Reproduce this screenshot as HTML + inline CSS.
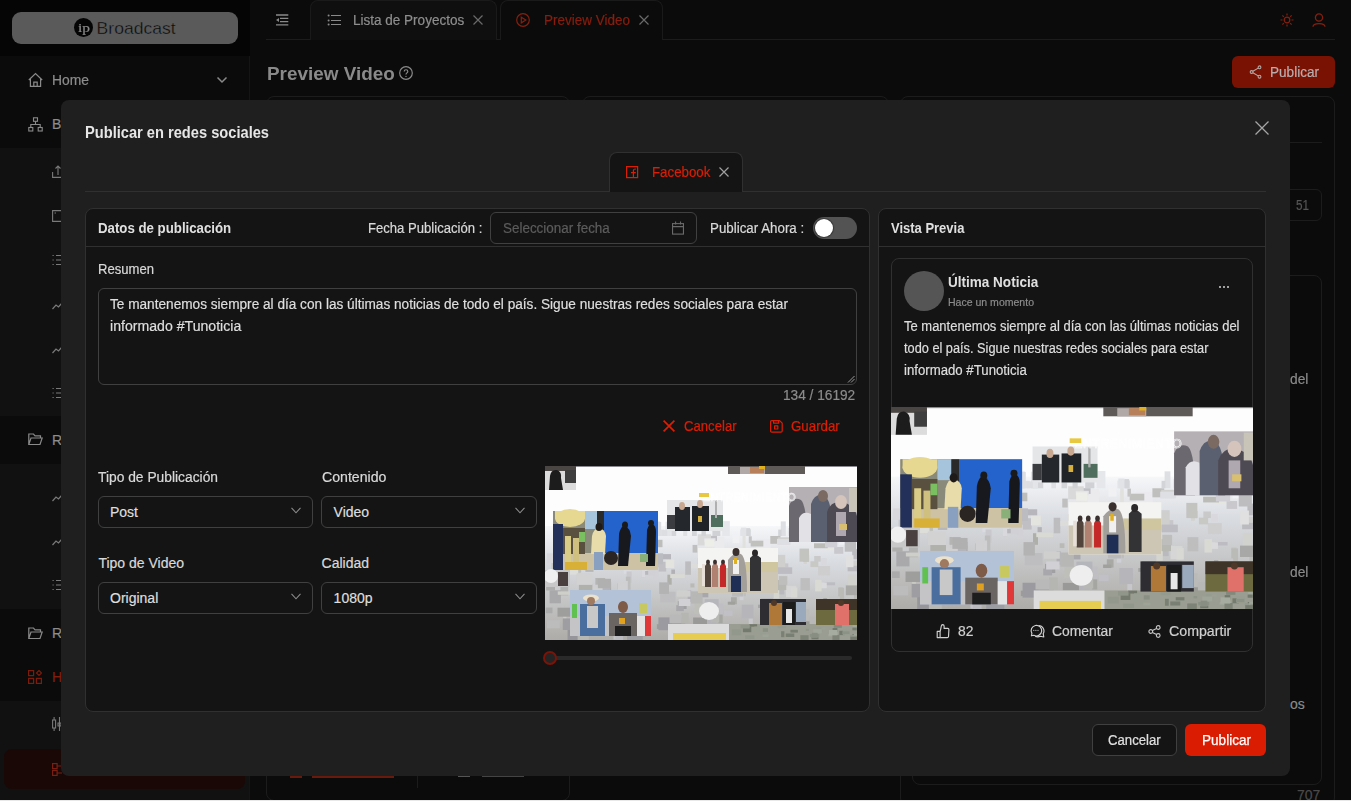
<!DOCTYPE html>
<html><head><meta charset="utf-8"><style>
*{box-sizing:border-box;margin:0;padding:0}
html,body{width:1351px;height:801px;overflow:hidden;background:#e8e8e8}
body{font-family:"Liberation Sans",sans-serif;position:relative}
.abs{position:absolute}
.t{position:absolute;white-space:nowrap;-webkit-text-stroke-width:0.2px}
</style></head><body>
<svg width="0" height="0" style="position:absolute"><defs><linearGradient id="cityg" x1="0" y1="0" x2="0" y2="1"><stop offset="0" stop-color="#f6f7f9"/><stop offset="0.3" stop-color="#dadde2"/><stop offset="1" stop-color="#aeaca8"/></linearGradient><g id="collage"><rect x="0.0" y="0.0" width="312.0" height="174.0" fill="#fdfdfd"/>
<rect x="0" y="60" width="312" height="114" fill="url(#cityg)"/>
<rect x="101.0" y="83.4" width="11.5" height="3.8" fill="#d4d4d3"/>
<rect x="18.1" y="119.8" width="3.5" height="7.8" fill="#aaaaa5"/>
<rect x="132.4" y="152.3" width="4.6" height="5.5" fill="#b7b7be"/>
<rect x="180.1" y="108.5" width="15.7" height="3.5" fill="#d8d8d6"/>
<rect x="45.0" y="80.0" width="7.0" height="12.0" fill="#c3c3c5"/>
<rect x="199.3" y="106.0" width="10.1" height="3.7" fill="#b0b0ac"/>
<rect x="212.3" y="111.6" width="7.1" height="9.4" fill="#c2c2c0"/>
<rect x="247.8" y="139.3" width="6.2" height="9.3" fill="#b8b8be"/>
<rect x="227.6" y="97.4" width="15.7" height="4.3" fill="#c7c7cb"/>
<rect x="47.4" y="117.9" width="3.5" height="10.4" fill="#cfcfd1"/>
<rect x="273.1" y="100.0" width="12.0" height="9.5" fill="#cecece"/>
<rect x="262.1" y="164.4" width="9.2" height="10.3" fill="#939396"/>
<rect x="201.9" y="169.3" width="13.7" height="6.1" fill="#a2a2a5"/>
<rect x="7.0" y="115.1" width="5.2" height="4.3" fill="#ababaf"/>
<rect x="40.4" y="93.3" width="8.1" height="12.6" fill="#b7b7b7"/>
<rect x="171.4" y="158.1" width="13.7" height="12.5" fill="#a2a2a1"/>
<rect x="111.9" y="158.2" width="15.5" height="4.7" fill="#9c9c99"/>
<rect x="72.8" y="117.5" width="10.7" height="5.9" fill="#a7a7a6"/>
<rect x="115.2" y="125.8" width="15.4" height="10.6" fill="#bebec0"/>
<rect x="211.0" y="73.5" width="14.7" height="11.6" fill="#eaeaef"/>
<rect x="122.4" y="108.7" width="4.3" height="10.0" fill="#afafa9"/>
<rect x="65.1" y="84.6" width="7.4" height="3.6" fill="#b7b7b3"/>
<rect x="31.7" y="105.1" width="3.3" height="12.6" fill="#cdcdc9"/>
<rect x="78.7" y="103.4" width="7.7" height="4.4" fill="#dadae1"/>
<rect x="145.4" y="117.4" width="4.1" height="4.1" fill="#b9b9b6"/>
<rect x="258.6" y="84.5" width="3.3" height="13.5" fill="#d3d3cf"/>
<rect x="169.5" y="70.8" width="9.9" height="13.8" fill="#ebebee"/>
<rect x="81.5" y="105.4" width="5.2" height="11.5" fill="#c9c9cd"/>
<rect x="102.9" y="90.8" width="13.5" height="13.8" fill="#e1e1e6"/>
<rect x="255.3" y="143.5" width="5.9" height="8.7" fill="#adada7"/>
<rect x="8.7" y="96.5" width="6.4" height="10.6" fill="#e3e3e3"/>
<rect x="292.4" y="168.8" width="15.4" height="7.0" fill="#9a9a97"/>
<rect x="61.4" y="88.8" width="11.1" height="12.9" fill="#e1e1e1"/>
<rect x="203.7" y="149.6" width="4.1" height="10.3" fill="#c7c7cb"/>
<rect x="234.0" y="116.8" width="5.3" height="11.7" fill="#b9b9be"/>
<rect x="303.2" y="108.4" width="8.2" height="13.4" fill="#d1d1cd"/>
<rect x="39.6" y="83.4" width="14.8" height="11.9" fill="#c0c0c5"/>
<rect x="305.9" y="135.0" width="7.6" height="9.0" fill="#a5a59f"/>
<rect x="302.9" y="134.3" width="9.8" height="13.3" fill="#b6b6bc"/>
<rect x="257.8" y="89.5" width="6.3" height="6.2" fill="#c1c1c3"/>
<rect x="80.9" y="110.7" width="4.7" height="13.0" fill="#bdbdbd"/>
<rect x="182.0" y="160.2" width="8.5" height="13.1" fill="#acacad"/>
<rect x="163.3" y="69.9" width="8.7" height="5.0" fill="#bfbfc4"/>
<rect x="53.8" y="116.3" width="12.4" height="9.1" fill="#b9b9ba"/>
<rect x="173.3" y="148.0" width="4.4" height="9.2" fill="#a5a5a2"/>
<rect x="240.9" y="119.8" width="10.3" height="11.4" fill="#d6d6d6"/>
<rect x="191.1" y="119.6" width="9.7" height="10.6" fill="#bebebf"/>
<rect x="149.1" y="164.0" width="12.1" height="12.6" fill="#c1c1be"/>
<rect x="174.6" y="164.2" width="13.9" height="4.5" fill="#979797"/>
<rect x="22.6" y="92.5" width="4.0" height="10.4" fill="#dcdce2"/>
<rect x="48.2" y="141.0" width="11.6" height="4.6" fill="#cacad1"/>
<rect x="68.5" y="165.2" width="8.2" height="8.4" fill="#c3c3c8"/>
<rect x="50.4" y="112.0" width="9.7" height="6.7" fill="#b4b4b2"/>
<rect x="225.3" y="70.0" width="10.2" height="7.8" fill="#bfbfbd"/>
<rect x="194.7" y="120.3" width="3.8" height="13.8" fill="#cfcfd6"/>
<rect x="32.7" y="95.1" width="3.5" height="11.6" fill="#c0c0bb"/>
<rect x="131.7" y="161.0" width="13.6" height="5.8" fill="#9a9aa0"/>
<rect x="178.0" y="139.4" width="4.2" height="3.6" fill="#c0c0bf"/>
<rect x="22.6" y="163.7" width="11.2" height="11.8" fill="#95959a"/>
<rect x="20.8" y="156.0" width="8.9" height="6.7" fill="#b1b1b7"/>
<rect x="83.6" y="81.2" width="9.8" height="5.6" fill="#bfbfbb"/>
<rect x="15.7" y="88.6" width="7.1" height="6.4" fill="#dddddb"/>
<rect x="156.0" y="86.1" width="7.5" height="3.2" fill="#c4c4be"/>
<rect x="228.7" y="124.2" width="5.5" height="8.2" fill="#d5d5d0"/>
<rect x="255.5" y="112.1" width="9.4" height="12.2" fill="#bebebf"/>
<rect x="214.6" y="168.2" width="7.5" height="12.2" fill="#b3b3b5"/>
<rect x="126.3" y="103.5" width="3.7" height="4.4" fill="#b2b2b6"/>
<rect x="79.7" y="84.7" width="4.1" height="12.3" fill="#e5e5e8"/>
<rect x="88.0" y="92.7" width="6.8" height="8.1" fill="#bcbcbc"/>
<rect x="82.1" y="166.1" width="15.6" height="9.0" fill="#9c9ca3"/>
<rect x="96.6" y="104.4" width="3.0" height="7.2" fill="#c6c6c7"/>
<rect x="62.7" y="119.5" width="3.1" height="5.9" fill="#ababaa"/>
<rect x="13.0" y="70.3" width="7.0" height="5.6" fill="#ddddde"/>
<rect x="234.2" y="135.1" width="12.3" height="12.7" fill="#b3b3b1"/>
<rect x="307.2" y="83.2" width="12.4" height="10.1" fill="#bababf"/>
<rect x="278.3" y="132.0" width="12.5" height="11.9" fill="#a7a7a8"/>
<rect x="157.4" y="153.2" width="13.5" height="12.1" fill="#b4b4ba"/>
<rect x="213.1" y="138.7" width="6.0" height="3.3" fill="#a4a4a3"/>
<rect x="32.7" y="153.3" width="10.3" height="9.9" fill="#b6b6b9"/>
<rect x="152.7" y="68.3" width="13.4" height="11.2" fill="#d9d9da"/>
<rect x="205.7" y="74.7" width="12.6" height="5.8" fill="#c0c0bd"/>
<rect x="227.6" y="88.9" width="12.6" height="13.7" fill="#cfcfce"/>
<rect x="149.5" y="137.7" width="13.0" height="9.8" fill="#bfbfba"/>
<rect x="46.0" y="93.9" width="12.7" height="6.3" fill="#d0d0ca"/>
<rect x="18.9" y="95.4" width="11.7" height="10.6" fill="#d5d5d3"/>
<rect x="161.2" y="115.4" width="9.1" height="4.3" fill="#d7d7d3"/>
<rect x="305.2" y="163.5" width="3.2" height="8.0" fill="#bbbbc2"/>
<rect x="140.2" y="95.4" width="5.7" height="13.4" fill="#bdbdbf"/>
<rect x="44.2" y="121.5" width="15.4" height="4.5" fill="#d0d0d1"/>
<rect x="276.7" y="139.7" width="6.0" height="12.9" fill="#b6b6b0"/>
<rect x="1.1" y="118.2" width="8.9" height="6.3" fill="#aeaeac"/>
<rect x="98.6" y="153.7" width="3.0" height="11.3" fill="#c1c1bc"/>
<rect x="289.0" y="140.7" width="14.7" height="6.2" fill="#afafae"/>
<rect x="311.6" y="128.1" width="7.7" height="7.7" fill="#b0b0aa"/>
<rect x="31.7" y="153.1" width="6.7" height="13.3" fill="#a3a3a0"/>
<rect x="159.4" y="87.4" width="7.9" height="13.5" fill="#e4e4e9"/>
<rect x="196.8" y="161.2" width="15.2" height="9.0" fill="#b7b7b1"/>
<rect x="228.5" y="114.0" width="12.8" height="10.1" fill="#b8b8b2"/>
<rect x="289.2" y="81.0" width="9.1" height="6.8" fill="#c9c9cd"/>
<rect x="304.6" y="94.5" width="11.5" height="6.3" fill="#cfcfce"/>
<rect x="52.2" y="84.5" width="5.7" height="13.0" fill="#d1d1ce"/>
<rect x="282.8" y="169.6" width="8.8" height="4.5" fill="#989893"/>
<rect x="106.7" y="77.3" width="6.1" height="5.8" fill="#d9d9df"/>
<rect x="233.9" y="110.1" width="8.4" height="8.8" fill="#bebebc"/>
<rect x="19.4" y="96.3" width="15.6" height="4.4" fill="#ccccce"/>
<rect x="269.2" y="90.0" width="6.5" height="5.7" fill="#c9c9c9"/>
<rect x="297.6" y="154.6" width="14.3" height="3.2" fill="#97979a"/>
<rect x="279.5" y="116.3" width="10.6" height="3.0" fill="#bcbcc2"/>
<rect x="257.6" y="155.3" width="15.6" height="5.7" fill="#9a9a96"/>
<rect x="163.0" y="137.6" width="15.2" height="10.9" fill="#bfbfc3"/>
<rect x="142.7" y="124.3" width="3.5" height="11.6" fill="#b0b0b6"/>
<rect x="201.4" y="99.0" width="4.7" height="5.8" fill="#d1d1d4"/>
<rect x="35.0" y="75.2" width="9.8" height="9.4" fill="#d0d0cd"/>
<rect x="187.5" y="69.1" width="6.9" height="8.1" fill="#f1f1f4"/>
<rect x="275.7" y="116.5" width="6.1" height="5.7" fill="#dadadd"/>
<rect x="95.9" y="70.2" width="9.5" height="10.4" fill="#d4d4d1"/>
<rect x="208.2" y="162.4" width="5.9" height="3.4" fill="#a3a3a2"/>
<rect x="213.0" y="88.2" width="13.4" height="11.1" fill="#d0d0cc"/>
<rect x="302.6" y="99.8" width="13.7" height="5.5" fill="#bbbbbf"/>
<rect x="92.0" y="165.1" width="9.4" height="5.1" fill="#9c9c9b"/>
<rect x="207.6" y="164.8" width="4.9" height="7.3" fill="#9b9ba2"/>
<rect x="44.3" y="73.3" width="3.8" height="7.3" fill="#ececf2"/>
<rect x="228.6" y="169.7" width="15.1" height="6.6" fill="#97979e"/>
<rect x="232.8" y="71.3" width="11.6" height="7.2" fill="#d1d1cf"/>
<rect x="52.8" y="68.3" width="6.6" height="6.9" fill="#f1f1ec"/>
<rect x="300.9" y="89.2" width="7.6" height="12.0" fill="#e0e0e0"/>
<rect x="15.4" y="116.3" width="7.8" height="13.1" fill="#b2b2b1"/>
<rect x="279.9" y="71.1" width="8.3" height="11.9" fill="#e6e6e0"/>
<rect x="10.9" y="74.4" width="15.0" height="5.8" fill="#e3e3e9"/>
<rect x="105.8" y="95.8" width="15.4" height="9.8" fill="#c0c0c4"/>
<rect x="98.7" y="96.1" width="3.0" height="11.3" fill="#e1e1e3"/>
<rect x="294.3" y="70.5" width="6.0" height="8.2" fill="#f0f0f7"/>
<rect x="120.6" y="93.6" width="8.6" height="8.4" fill="#e3e3df"/>
<rect x="250.4" y="143.3" width="13.7" height="11.5" fill="#babab8"/>
<rect x="99.7" y="104.9" width="13.2" height="3.9" fill="#b8b8bc"/>
<rect x="77.2" y="74.6" width="3.4" height="9.1" fill="#cdcdd4"/>
<rect x="275.6" y="168.8" width="6.4" height="3.9" fill="#939393"/>
<rect x="221.4" y="113.6" width="6.0" height="7.6" fill="#c9c9cc"/>
<rect x="233.4" y="154.4" width="11.6" height="4.3" fill="#c1c1bf"/>
<rect x="176.9" y="106.0" width="12.6" height="5.2" fill="#babab7"/>
<rect x="47.8" y="158.2" width="10.5" height="6.6" fill="#a8a8af"/>
<rect x="158.3" y="91.6" width="13.5" height="10.2" fill="#e7e7e2"/>
<rect x="148.1" y="151.5" width="13.9" height="13.1" fill="#999997"/>
<rect x="37.2" y="87.3" width="15.6" height="9.4" fill="#e6e6e5"/>
<rect x="270.2" y="113.8" width="6.4" height="11.6" fill="#dadad5"/>
<rect x="186.0" y="131.2" width="5.8" height="7.1" fill="#a8a8a4"/>
<rect x="79.5" y="129.1" width="11.5" height="5.2" fill="#a2a2a0"/>
<rect x="211.6" y="86.9" width="7.1" height="5.2" fill="#e0e0e1"/>
<rect x="19.7" y="78.3" width="8.1" height="9.1" fill="#dcdcd7"/>
<rect x="51.1" y="138.9" width="8.3" height="6.1" fill="#adadb4"/>
<rect x="97.5" y="125.8" width="7.6" height="7.6" fill="#d0d0d7"/>
<rect x="113.5" y="88.1" width="12.5" height="5.2" fill="#b6b6bc"/>
<rect x="132.2" y="151.7" width="8.3" height="12.7" fill="#aeaeaa"/>
<rect x="4.6" y="124.3" width="11.3" height="13.0" fill="#a9a9ab"/>
<rect x="115.7" y="119.5" width="4.9" height="6.1" fill="#c1c1c7"/>
<rect x="33.9" y="118.0" width="13.5" height="13.6" fill="#b1b1ac"/>
<rect x="294.2" y="167.5" width="9.3" height="3.6" fill="#bfbfbe"/>
<rect x="282.1" y="131.3" width="13.7" height="4.8" fill="#c9c9c6"/>
<rect x="126.2" y="154.3" width="13.8" height="5.0" fill="#a1a1a0"/>
<rect x="161.6" y="107.1" width="4.6" height="5.7" fill="#d2d2d8"/>
<rect x="12.8" y="125.4" width="12.8" height="3.4" fill="#cfcfca"/>
<rect x="187.1" y="124.1" width="11.2" height="6.4" fill="#bababc"/>
<rect x="132.8" y="135.2" width="8.8" height="7.8" fill="#a0a0a2"/>
<rect x="152.7" y="92.0" width="12.9" height="11.6" fill="#ccccc8"/>
<rect x="147.6" y="78.9" width="4.7" height="7.7" fill="#bfbfbf"/>
<rect x="159.2" y="72.2" width="11.3" height="3.9" fill="#e4e4e8"/>
<rect x="159.6" y="73.5" width="9.6" height="7.2" fill="#eeeee9"/>
<rect x="267.4" y="169.6" width="12.5" height="12.0" fill="#98989f"/>
<rect x="153.5" y="165.6" width="14.9" height="4.8" fill="#b9b9c0"/>
<rect x="20.4" y="103.8" width="12.8" height="4.7" fill="#ddddda"/>
<rect x="254.5" y="82.6" width="9.5" height="13.1" fill="#c3c3c0"/>
<rect x="157.9" y="100.5" width="3.5" height="5.0" fill="#b8b8bf"/>
<rect x="212.1" y="159.3" width="5.2" height="11.6" fill="#99999a"/>
<rect x="198.5" y="104.7" width="14.3" height="9.1" fill="#ccccd2"/>
<rect x="32.6" y="169.3" width="11.2" height="7.3" fill="#b7b7b4"/>
<rect x="309.0" y="126.9" width="7.7" height="11.4" fill="#babab6"/>
<rect x="232.0" y="72.9" width="13.7" height="5.8" fill="#dedee5"/>
<rect x="182.8" y="135.7" width="7.1" height="3.0" fill="#a0a09c"/>
<rect x="192.2" y="112.1" width="9.7" height="12.9" fill="#b1b1ae"/>
<rect x="203.8" y="70.3" width="3.0" height="6.9" fill="#c4c4c3"/>
<rect x="70.0" y="127.5" width="10.7" height="5.2" fill="#c3c3c3"/>
<rect x="42.0" y="163.5" width="6.2" height="4.6" fill="#969698"/>
<rect x="271.8" y="147.8" width="8.2" height="5.9" fill="#99999c"/>
<rect x="175.4" y="103.7" width="11.4" height="7.9" fill="#dfdfe3"/>
<rect x="77.5" y="160.2" width="3.6" height="8.8" fill="#a7a7a4"/>
<rect x="18.2" y="147.4" width="3.2" height="9.1" fill="#c9c9c4"/>
<rect x="62.2" y="130.0" width="9.6" height="10.1" fill="#cbcbc7"/>
<rect x="96.5" y="98.6" width="3.6" height="12.8" fill="#d9d9dd"/>
<rect x="2.0" y="154.1" width="12.7" height="8.1" fill="#bcbcbc"/>
<rect x="70.5" y="78.7" width="6.0" height="3.4" fill="#ccccd0"/>
<rect x="216.9" y="154.2" width="12.3" height="5.9" fill="#b2b2b2"/>
<rect x="246.0" y="121.4" width="6.4" height="10.1" fill="#d8d8d5"/>
<rect x="274.6" y="69.6" width="6.4" height="5.6" fill="#e5e5ec"/>
<rect x="232.8" y="101.3" width="14.4" height="6.6" fill="#bcbcc2"/>
<rect x="196.8" y="138.7" width="11.6" height="13.8" fill="#b5b5ba"/>
<rect x="217.7" y="155.5" width="8.7" height="11.0" fill="#b2b2b0"/>
<rect x="66.1" y="131.5" width="4.0" height="13.0" fill="#a8a8a2"/>
<rect x="33.3" y="162.8" width="7.5" height="4.6" fill="#93938d"/>
<rect x="216.1" y="132.7" width="12.1" height="11.1" fill="#a3a3a5"/>
<rect x="113.4" y="151.4" width="13.7" height="12.8" fill="#9a9aa0"/>
<rect x="285.3" y="164.3" width="4.4" height="5.3" fill="#969690"/>
<rect x="264.5" y="150.8" width="11.2" height="12.1" fill="#b8b8b6"/>
<rect x="31.2" y="78.0" width="12.8" height="5.3" fill="#cbcbca"/>
<rect x="6.5" y="94.2" width="6.7" height="10.9" fill="#c6c6c4"/>
<rect x="300.8" y="119.4" width="14.1" height="9.8" fill="#a8a8a7"/>
<rect x="136.2" y="146.8" width="7.5" height="10.8" fill="#b5b5b2"/>
<rect x="269.0" y="77.3" width="13.7" height="4.9" fill="#bbbbb7"/>
<rect x="237.8" y="167.7" width="3.1" height="8.4" fill="#a8a8ad"/>
<rect x="57.6" y="118.4" width="7.5" height="12.2" fill="#b4b4bb"/>
<rect x="88.5" y="89.9" width="12.1" height="8.5" fill="#bababc"/>
<rect x="25.2" y="148.4" width="12.1" height="11.7" fill="#b9b9b7"/>
<rect x="125.2" y="108.2" width="14.6" height="3.9" fill="#dadad4"/>
<rect x="64.3" y="94.8" width="14.7" height="8.5" fill="#c6c6cc"/>
<rect x="72.9" y="115.0" width="9.9" height="11.3" fill="#d0d0d3"/>
<rect x="108.7" y="101.3" width="5.0" height="12.3" fill="#d2d2d6"/>
<rect x="52.9" y="112.8" width="13.1" height="9.4" fill="#b0b0b0"/>
<rect x="276.2" y="92.3" width="5.5" height="6.3" fill="#d8d8dd"/>
<rect x="48.2" y="83.9" width="6.2" height="6.6" fill="#d3d3cf"/>
<rect x="102.4" y="87.3" width="15.7" height="11.0" fill="#bbbbc2"/>
<rect x="31.7" y="107.2" width="15.8" height="11.7" fill="#d2d2d2"/>
<rect x="61.2" y="133.1" width="4.4" height="5.3" fill="#b4b4ae"/>
<rect x="124.5" y="148.7" width="12.0" height="8.5" fill="#b9b9b9"/>
<rect x="44.2" y="129.6" width="8.3" height="11.2" fill="#d1d1d1"/>
<rect x="179.1" y="144.4" width="8.5" height="5.5" fill="#c0c0c6"/>
<rect x="241.5" y="139.4" width="14.1" height="10.5" fill="#bebebe"/>
<rect x="97.7" y="132.1" width="4.3" height="7.6" fill="#c9c9cc"/>
<rect x="196.4" y="93.5" width="8.5" height="8.0" fill="#d3d3d2"/>
<rect x="210.7" y="162.9" width="5.4" height="10.2" fill="#b9b9b8"/>
<rect x="152.8" y="167.4" width="3.5" height="9.0" fill="#97979b"/>
<rect x="293.5" y="121.0" width="4.3" height="9.3" fill="#c2c2c6"/>
<rect x="159.8" y="133.2" width="13.8" height="8.7" fill="#b5b5bc"/>
<rect x="65.5" y="137.8" width="8.1" height="11.4" fill="#a4a4ab"/>
<rect x="110.9" y="73.8" width="6.6" height="7.4" fill="#bdbdbc"/>
<rect x="131.2" y="139.2" width="7.6" height="5.9" fill="#a8a8ac"/>
<rect x="293.3" y="121.8" width="5.8" height="11.8" fill="#babab6"/>
<rect x="40.3" y="147.2" width="13.5" height="10.0" fill="#b1b1b2"/>
<rect x="70.5" y="166.3" width="7.6" height="10.0" fill="#bababf"/>
<rect x="146.0" y="98.0" width="10.1" height="4.4" fill="#dcdcda"/>
<rect x="265.4" y="95.3" width="7.9" height="5.8" fill="#c8c8c4"/>
<rect x="0.8" y="141.6" width="6.7" height="5.7" fill="#ababab"/>
<rect x="133.7" y="133.0" width="11.6" height="7.0" fill="#d0d0d5"/>
<rect x="17.8" y="152.4" width="14.8" height="11.6" fill="#9d9da2"/>
<rect x="197.5" y="69.5" width="3.1" height="13.5" fill="#e1e1de"/>
<rect x="31.7" y="82.6" width="6.0" height="11.5" fill="#cacac6"/>
<rect x="282.1" y="148.8" width="5.2" height="12.8" fill="#b8b8bc"/>
<rect x="208.6" y="159.2" width="13.2" height="12.2" fill="#9d9da0"/>
<rect x="165.6" y="143.7" width="8.7" height="12.7" fill="#b7b7b4"/>
<rect x="73.1" y="82.2" width="9.4" height="3.6" fill="#d1d1cd"/>
<rect x="153.3" y="118.8" width="10.0" height="12.5" fill="#a7a7ac"/>
<rect x="146.0" y="125.4" width="11.6" height="12.2" fill="#b7b7b6"/>
<rect x="299.7" y="75.7" width="11.3" height="10.0" fill="#bdbdbf"/>
<rect x="213.0" y="163.0" width="7.3" height="13.8" fill="#ababab"/>
<rect x="280.0" y="71.5" width="12.3" height="9.9" fill="#cfcfd5"/>
<rect x="114.2" y="116.4" width="9.8" height="11.5" fill="#b3b3b3"/>
<rect x="131.8" y="124.5" width="13.7" height="6.2" fill="#cfcfce"/>
<rect x="157.2" y="95.7" width="9.6" height="13.7" fill="#d4d4d9"/>
<rect x="103.2" y="100.3" width="6.9" height="9.5" fill="#d1d1d5"/>
<rect x="12.5" y="141.7" width="14.5" height="9.0" fill="#9e9e9c"/>
<rect x="1.9" y="87.4" width="15.0" height="9.7" fill="#d8d8dd"/>
<rect x="283.9" y="130.4" width="11.0" height="9.9" fill="#c5c5c7"/>
<rect x="128.0" y="158.0" width="184.0" height="16.0" fill="#9a9e92"/>
<rect x="271.5" y="161.0" width="6.2" height="5.1" fill="#979c90"/>
<rect x="197.9" y="160.5" width="8.4" height="5.7" fill="#757a6e"/>
<rect x="268.3" y="163.2" width="8.5" height="4.2" fill="#a0a599"/>
<rect x="217.8" y="162.2" width="5.2" height="3.7" fill="#8a8f83"/>
<rect x="266.5" y="171.1" width="7.0" height="2.2" fill="#767b6f"/>
<rect x="200.1" y="169.3" width="9.4" height="3.8" fill="#92978b"/>
<rect x="186.8" y="163.4" width="9.6" height="5.9" fill="#93988c"/>
<rect x="245.4" y="163.8" width="7.5" height="2.8" fill="#787d71"/>
<rect x="204.3" y="158.2" width="7.8" height="2.5" fill="#73786c"/>
<rect x="307.7" y="159.2" width="3.9" height="2.1" fill="#a2a79b"/>
<rect x="276.4" y="161.4" width="4.3" height="2.2" fill="#9ba094"/>
<rect x="283.3" y="168.0" width="8.1" height="2.3" fill="#a2a79b"/>
<rect x="264.8" y="167.9" width="9.5" height="3.0" fill="#8c9185"/>
<rect x="307.5" y="168.0" width="3.1" height="4.6" fill="#73786c"/>
<rect x="288.8" y="159.1" width="8.1" height="2.7" fill="#84897d"/>
<rect x="294.3" y="164.8" width="5.6" height="4.3" fill="#767b6f"/>
<rect x="240.7" y="167.5" width="8.6" height="3.5" fill="#7a7f73"/>
<rect x="266.9" y="166.8" width="5.7" height="5.1" fill="#898e82"/>
<rect x="305.0" y="169.0" width="5.0" height="2.2" fill="#92978b"/>
<rect x="308.7" y="167.8" width="5.3" height="4.4" fill="#a0a599"/>
<rect x="309.1" y="169.6" width="5.2" height="3.7" fill="#94998d"/>
<rect x="297.8" y="163.3" width="7.2" height="5.6" fill="#989d91"/>
<rect x="287.6" y="162.0" width="4.8" height="3.7" fill="#73786c"/>
<rect x="259.5" y="169.4" width="3.3" height="5.3" fill="#a3a89c"/>
<rect x="288.1" y="170.1" width="4.9" height="5.4" fill="#92978b"/>
<rect x="287.5" y="167.6" width="5.4" height="2.3" fill="#a5aa9e"/>
<rect x="255.3" y="169.2" width="8.3" height="5.7" fill="#7e8377"/>
<rect x="214.7" y="166.5" width="6.3" height="2.8" fill="#989d91"/>
<rect x="217.4" y="168.5" width="6.2" height="2.4" fill="#9ea397"/>
<rect x="287.4" y="168.8" width="7.1" height="5.6" fill="#7f8478"/>
<rect x="297.4" y="165.3" width="7.1" height="2.8" fill="#8d9286"/>
<rect x="209.4" y="160.5" width="5.5" height="4.3" fill="#999e92"/>
<rect x="236.1" y="165.2" width="3.3" height="6.0" fill="#7b8074"/>
<rect x="232.5" y="159.5" width="8.5" height="2.6" fill="#959a8e"/>
<rect x="260.8" y="162.8" width="3.1" height="2.1" fill="#8f9488"/>
<rect x="310.8" y="170.1" width="7.0" height="3.0" fill="#8d9286"/>
<rect x="284.0" y="164.0" width="8.4" height="5.3" fill="#a7aca0"/>
<rect x="307.4" y="161.6" width="4.4" height="2.7" fill="#757a6e"/>
<rect x="195.6" y="158.7" width="9.1" height="3.8" fill="#91968a"/>
<rect x="305.3" y="170.7" width="7.2" height="3.6" fill="#767b6f"/>
<rect x="125.4" y="55.4" width="5.8" height="14.6" fill="#d3d5d9"/>
<rect x="235.8" y="55.4" width="5.0" height="14.6" fill="#dddfe3"/>
<rect x="195.0" y="63.4" width="8.0" height="6.6" fill="#e5e7eb"/>
<rect x="147.0" y="64.6" width="4.8" height="5.4" fill="#d3d5d9"/>
<rect x="291.4" y="56.0" width="3.2" height="14.0" fill="#e1e3e7"/>
<rect x="266.7" y="57.9" width="7.9" height="12.1" fill="#dddfe3"/>
<rect x="111.8" y="63.6" width="7.7" height="6.4" fill="#dfe1e5"/>
<rect x="243.5" y="62.0" width="6.8" height="8.0" fill="#dbdde1"/>
<rect x="122.3" y="61.8" width="3.6" height="8.2" fill="#d3d5d9"/>
<rect x="202.0" y="63.3" width="3.7" height="6.7" fill="#d2d4d8"/>
<rect x="243.7" y="64.9" width="4.0" height="5.1" fill="#dee0e4"/>
<rect x="107.6" y="55.7" width="7.7" height="14.3" fill="#d2d4d8"/>
<rect x="283.8" y="56.1" width="5.2" height="13.9" fill="#d0d2d6"/>
<rect x="120.6" y="55.7" width="6.1" height="14.3" fill="#e2e4e8"/>
<rect x="195.9" y="61.6" width="5.4" height="8.4" fill="#e1e3e7"/>
<rect x="233.2" y="63.6" width="3.3" height="6.4" fill="#d2d4d8"/>
<rect x="251.3" y="59.5" width="7.4" height="10.5" fill="#d0d2d6"/>
<rect x="156.5" y="60.9" width="4.4" height="9.1" fill="#d0d2d6"/>
<rect x="278.0" y="61.7" width="5.5" height="8.3" fill="#d1d3d7"/>
<rect x="167.4" y="56.0" width="7.9" height="14.0" fill="#cfd1d5"/>
<rect x="112.1" y="56.0" width="4.1" height="14.0" fill="#dddfe3"/>
<rect x="201.2" y="62.1" width="4.0" height="7.9" fill="#d3d5d9"/>
<rect x="177.2" y="55.1" width="7.6" height="14.9" fill="#e5e7eb"/>
<rect x="120.7" y="62.1" width="3.3" height="7.9" fill="#e3e5e9"/>
<rect x="254.0" y="62.1" width="3.1" height="7.9" fill="#e5e7eb"/>
<rect x="271.1" y="61.6" width="3.0" height="8.4" fill="#d0d2d6"/>
<rect x="276.4" y="59.7" width="5.2" height="10.3" fill="#d1d3d7"/>
<rect x="293.3" y="62.8" width="3.7" height="7.2" fill="#dbdde1"/>
<rect x="138.2" y="57.3" width="4.0" height="12.7" fill="#dee0e4"/>
<rect x="116.8" y="64.1" width="5.5" height="5.9" fill="#dcdee2"/>
<rect x="0.0" y="0.0" width="312.0" height="1.0" fill="#8a8a90"/>
<rect x="0.0" y="0.0" width="31.0" height="24.0" fill="#dcdcdc"/>
<rect x="0.0" y="0.0" width="31.0" height="5.0" fill="#4a4644"/>
<rect x="20.0" y="4.0" width="11.0" height="13.0" fill="#3e3e3e"/>
<path d="M4 24 L5 10 Q6 3 12 4 Q17 6 16 12 L18 24 Z" fill="#1c1c1c"/>
<rect x="183.0" y="0.0" width="77.0" height="8.0" fill="#5e5a58"/>
<rect x="195.0" y="1.0" width="25.0" height="7.0" fill="#b0a8a6"/>
<rect x="205.0" y="1.0" width="14.0" height="6.0" fill="#b8805a"/>
<rect x="214.0" y="0.0" width="6.0" height="3.0" fill="#e0b020"/>
<rect x="8.0" y="45.0" width="105.0" height="59.0" fill="#cdc2a4"/>
<rect x="59.0" y="45.0" width="54.0" height="42.0" fill="#2563cc"/>
<rect x="8.0" y="45.0" width="51.0" height="42.0" fill="#8a8a7a"/>
<ellipse cx="25" cy="52" rx="15" ry="9" fill="#e6d890"/>
<rect x="10.0" y="45.0" width="30.0" height="8.0" fill="#e6d890"/>
<rect x="40.0" y="45.0" width="12.0" height="18.0" fill="#a6c4dc"/>
<rect x="52.0" y="45.0" width="7.0" height="22.0" fill="#2a2a2a"/>
<rect x="8.0" y="58.0" width="10.0" height="46.0" fill="#22305a"/>
<rect x="18.0" y="62.0" width="22.0" height="26.0" fill="#5a5040"/>
<rect x="20.0" y="70.0" width="6.0" height="30.0" fill="#d8cc88"/>
<rect x="28.0" y="72.0" width="6.0" height="28.0" fill="#cfc080"/>
<rect x="34.0" y="66.0" width="6.0" height="10.0" fill="#7ac060"/>
<path d="M46 88 L47 70 Q49 62 54 62 Q60 63 61 70 L60 88 Z" fill="#e8dcaa"/>
<rect x="49.0" y="86.0" width="9.0" height="18.0" fill="#8aa0c0"/>
<ellipse cx="54" cy="61" rx="3.5" ry="4" fill="#1e1a1a"/>
<path d="M73 100 L74 68 Q76 59 80 60 Q85 62 86 70 L83 100 Z" fill="#17191e"/>
<ellipse cx="80" cy="59" rx="3" ry="3.5" fill="#1a1a1a"/>
<path d="M101 100 L102 64 Q104 57 107 58 Q111 59 111 66 L110 100 Z" fill="#16181c"/>
<ellipse cx="106" cy="57" rx="3" ry="3" fill="#1a1a1a"/>
<ellipse cx="66" cy="92" rx="7" ry="7" fill="#2a2522"/>
<rect x="20.0" y="96.0" width="22.0" height="8.0" fill="#d8b038"/>
<rect x="95.0" y="88.0" width="8.0" height="8.0" fill="#8ab07a"/>
<rect x="122.0" y="34.0" width="56.0" height="31.0" fill="#e4e6e8"/>
<rect x="130.0" y="41.0" width="15.0" height="24.0" fill="#24272b"/>
<ellipse cx="137" cy="40" rx="3" ry="4" fill="#c8a890"/>
<rect x="147.0" y="40.0" width="17.0" height="25.0" fill="#202327"/>
<ellipse cx="155" cy="38" rx="3" ry="4" fill="#c8a890"/>
<rect x="153.0" y="50.0" width="4.0" height="6.0" fill="#d8b040"/>
<rect x="122.0" y="49.0" width="8.0" height="14.0" fill="#3a3c40"/>
<rect x="166.0" y="49.0" width="12.0" height="12.0" fill="#4f6e5e"/>
<rect x="170.0" y="34.0" width="2.0" height="18.0" fill="#b0b0b0"/>
<rect x="244.0" y="21.0" width="68.0" height="55.0" fill="#b4b0b4"/>
<path d="M244 76 V40 Q248 30 256 34 Q262 40 262 76 Z" fill="#6c6870"/>
<path d="M254 76 V52 Q258 44 266 48 L268 76 Z" fill="#e2e2e6"/>
<path d="M266 76 V38 Q270 26 280 30 Q288 36 288 76 Z" fill="#5a6070"/>
<ellipse cx="278" cy="30" rx="5" ry="6" fill="#7a6a62"/>
<path d="M282 76 V46 Q286 34 298 36 Q310 40 312 50 V76 Z" fill="#4e4a54"/>
<ellipse cx="296" cy="36" rx="6" ry="7" fill="#d4c4bc"/>
<rect x="291.0" y="46.0" width="10.0" height="24.0" fill="#b0a8b0"/>
<rect x="294.0" y="58.0" width="8.0" height="6.0" fill="#d8c070"/>
<rect x="304.0" y="22.0" width="8.0" height="24.0" fill="#c8c4b8"/>
<text x="158" y="35" font-family="Liberation Sans" font-size="10.5" fill="none" stroke="#ffffff" stroke-width="0.6" letter-spacing="0.5" opacity="0.9">ENTRENIMIENTO</text>
<rect x="154.0" y="27.0" width="10.0" height="4.0" fill="#e8c840"/>
<rect x="153.0" y="82.0" width="80.0" height="45.0" fill="#f4f4f2"/>
<rect x="153.0" y="102.0" width="80.0" height="25.0" fill="#cdc6b4"/>
<rect x="200.0" y="96.0" width="33.0" height="10.0" fill="#cfc6a0"/>
<path d="M160 121 V100 Q163 94 166 100 V121 Z" fill="#50443c"/>
<ellipse cx="163" cy="96" rx="2" ry="2.5" fill="#3a3030"/>
<path d="M167 121 V100 Q170 94 173 100 V121 Z" fill="#b08070"/>
<ellipse cx="170" cy="96" rx="2" ry="2.5" fill="#3a3030"/>
<path d="M175 121 V100 Q178 94 181 100 V121 Z" fill="#c42828"/>
<ellipse cx="178" cy="96" rx="2" ry="2.5" fill="#3a3030"/>
<rect x="157.0" y="98.0" width="3.0" height="22.0" fill="#e8e0d8"/>
<path d="M183 126 V94 Q189 86 196 88 Q202 92 202 126 Z" fill="#a29e9a"/>
<rect x="188.0" y="94.0" width="6.0" height="14.0" fill="#f0f0f0"/>
<rect x="186.0" y="110.0" width="10.0" height="16.0" fill="#1f2e55"/>
<ellipse cx="191" cy="86" rx="3.5" ry="4" fill="#3a3030"/>
<rect x="189.0" y="92.0" width="3.0" height="6.0" fill="#e0b020"/>
<path d="M205 125 V92 Q210 86 216 92 V125 Z" fill="#333336"/>
<ellipse cx="210" cy="87" rx="3" ry="3.5" fill="#2a2828"/>
<rect x="25.0" y="124.0" width="81.0" height="46.0" fill="#b4c2d8"/>
<rect x="25.0" y="150.0" width="81.0" height="20.0" fill="#c4c4c6"/>
<rect x="35.0" y="138.0" width="25.0" height="32.0" fill="#4a6e9e"/>
<rect x="42.0" y="140.0" width="11.0" height="22.0" fill="#c8c8c8"/>
<ellipse cx="46" cy="132" rx="8" ry="3.5" fill="#ece2cc"/>
<ellipse cx="46" cy="135" rx="4" ry="4" fill="#a07a60"/>
<rect x="64.0" y="147.0" width="28.0" height="23.0" fill="#6a6462"/>
<ellipse cx="78" cy="141" rx="5" ry="6" fill="#7e5a48"/>
<rect x="70.0" y="160.0" width="16.0" height="10.0" fill="#1e1e1e"/>
<rect x="74.0" y="152.0" width="6.0" height="6.0" fill="#e0a020"/>
<rect x="100.0" y="150.0" width="6.0" height="20.0" fill="#e03838"/>
<rect x="92.0" y="150.0" width="8.0" height="20.0" fill="#e4e4e4"/>
<rect x="27.0" y="138.0" width="5.0" height="14.0" fill="#60c050"/>
<rect x="94.0" y="137.0" width="8.0" height="10.0" fill="#c8c860"/>
<rect x="0.0" y="104.0" width="25.0" height="17.0" fill="#c8c8c8"/>
<ellipse cx="6" cy="110" rx="7" ry="7" fill="#f0f0f0"/>
<rect x="13.0" y="106.0" width="10.0" height="14.0" fill="#4a4040"/>
<ellipse cx="164" cy="145" rx="10" ry="9" fill="#eeeeee"/>
<rect x="215.0" y="133.0" width="46.0" height="26.0" fill="#2e2e32"/>
<rect x="224.0" y="137.0" width="13.0" height="22.0" fill="#b07838"/>
<ellipse cx="229" cy="137" rx="3" ry="3" fill="#503828"/>
<rect x="238.0" y="136.0" width="12.0" height="23.0" fill="#1c1c1c"/>
<rect x="241.0" y="143.0" width="6.0" height="14.0" fill="#e8e8e8"/>
<rect x="251.0" y="136.0" width="10.0" height="20.0" fill="#9aaabc"/>
<rect x="271.0" y="133.0" width="41.0" height="26.0" fill="#6e6a40"/>
<rect x="271.0" y="133.0" width="41.0" height="11.0" fill="#3e3428"/>
<rect x="290.0" y="138.0" width="14.0" height="21.0" fill="#e0706a"/>
<ellipse cx="296" cy="137" rx="3" ry="3" fill="#503828"/>
<rect x="123.0" y="158.0" width="61.0" height="16.0" fill="#dcdcdc"/>
<rect x="128.0" y="167.0" width="53.0" height="7.0" fill="#e6cc50"/></g></defs></svg>
<div class="abs" style="left:0px;top:0px;width:1351px;height:800px;background:#0b0b0b"></div>
<div class="abs" style="left:0px;top:0px;width:250px;height:800px;background:#0b0b0b"></div>
<div class="abs" style="left:249px;top:56px;width:1px;height:744px;background:#151515"></div>
<div class="abs" style="left:0px;top:0px;width:250px;height:56px;background:#050505"></div>
<div class="abs" style="left:12px;top:12px;width:226px;height:32px;background:#5a5a5a;border-radius:9px"></div>
<div class="abs" style="left:74px;top:18px;width:19px;height:19px;background:#050505;border-radius:50%"></div>
<div class="t" style="left:77.50px;top:22px;font-size:12px;line-height:12px;color:#8a8a8a;transform:scaleX(1.2848);transform-origin:0 0;font-family:'Liberation Serif',serif;">ip</div>
<svg class="abs" style="left:94px;top:16px" width="90" height="22" viewBox="0 0 90 22"><text x="2.6" y="17.6" font-family="Liberation Sans" font-size="17" fill="#0a0a0a" stroke="#5a5a5a" stroke-width="0.4" textLength="79" lengthAdjust="spacingAndGlyphs">Broadcast</text></svg>
<div class="abs" style="left:0px;top:148px;width:249px;height:268px;background:#111111"></div>
<div class="abs" style="left:0px;top:464px;width:249px;height:145px;background:#111111"></div>
<div class="abs" style="left:0px;top:701px;width:249px;height:99px;background:#111111"></div>
<div class="abs" style="left:4px;top:749px;width:241px;height:40px;background:#1a0806;border-radius:8px"></div>
<svg class="abs" style="left:28px;top:72px;" width="15" height="16" viewBox="0 0 15 16" fill="none"><path d="M0.8 8 L7.5 1.6 L14.2 8 M2.4 6.5 V14.4 H12.6 V6.5 M5.8 14.4 V10.2 H9.2 V14.4" stroke="#8a8a8a" stroke-width="1.2"/></svg>
<div class="t" style="left:52.00px;top:73px;font-size:14px;line-height:14px;color:#8c8c8c;transform:scaleX(0.9907);transform-origin:0 0;">Home</div>
<svg class="abs" style="left:216px;top:76px;" width="12" height="8" viewBox="0 0 12 8" fill="none"><path d="M1.5 1.5 L6 6 L10.5 1.5" stroke="#8a8a8a" stroke-width="1.5"/></svg>
<svg class="abs" style="left:28px;top:117px;" width="15" height="15" viewBox="0 0 15 15" fill="none"><g stroke="#8a8a8a" stroke-width="1.1"><rect x="5.5" y="0.8" width="4" height="3.5"/><rect x="0.8" y="10.5" width="4" height="3.5"/><rect x="10.2" y="10.5" width="4" height="3.5"/><path d="M7.5 4.3 V7.5 M2.8 10.5 V7.5 H12.2 V10.5"/></g></svg>
<div class="t" style="left:52.00px;top:117px;font-size:14px;line-height:14px;color:#8c8c8c;">B</div>
<svg class="abs" style="left:52px;top:165px;" width="10" height="13" viewBox="0 0 10 13" fill="none"><path d="M0.6 7 V12.4 H10 M6 10 V1 M3.5 3.5 L6 1 L8.5 3.5" stroke="#7a7a7a" stroke-width="1.1"/></svg>
<svg class="abs" style="left:52px;top:210px;" width="10" height="12" viewBox="0 0 10 12" fill="none"><path d="M10 0.6 H0.6 V11.4 H10 M2.5 3 H4" stroke="#7a7a7a" stroke-width="1.1"/></svg>
<svg class="abs" style="left:52px;top:254px;" width="10" height="12" viewBox="0 0 10 12" fill="none"><path d="M0.5 1.5h1.2M0.5 6h1.2M0.5 10.5h1.2M4 1.5h6M4 6h6M4 10.5h6" stroke="#7a7a7a" stroke-width="1.2"/></svg>
<svg class="abs" style="left:52px;top:301px;" width="10" height="9" viewBox="0 0 10 9" fill="none"><path d="M0.5 8 L4 4 L6.5 6 L10 2" stroke="#7a7a7a" stroke-width="1.2"/></svg>
<svg class="abs" style="left:52px;top:345px;" width="10" height="9" viewBox="0 0 10 9" fill="none"><path d="M0.5 8 L4 4 L6.5 6 L10 2" stroke="#7a7a7a" stroke-width="1.2"/></svg>
<svg class="abs" style="left:52px;top:387px;" width="10" height="12" viewBox="0 0 10 12" fill="none"><path d="M0.5 1.5h1.2M0.5 6h1.2M0.5 10.5h1.2M4 1.5h6M4 6h6M4 10.5h6" stroke="#7a7a7a" stroke-width="1.2"/></svg>
<svg class="abs" style="left:28px;top:433px;" width="15" height="13" viewBox="0 0 15 13" fill="none"><path d="M0.8 11.5 V1 H5.5 L7 2.8 H12.5 V5 M0.8 11.5 L3 5 H14.2 L12 11.5 Z" stroke="#8a8a8a" stroke-width="1.2"/></svg>
<div class="t" style="left:52.00px;top:433px;font-size:14px;line-height:14px;color:#8c8c8c;">R</div>
<svg class="abs" style="left:52px;top:493px;" width="10" height="9" viewBox="0 0 10 9" fill="none"><path d="M0.5 8 L4 4 L6.5 6 L10 2" stroke="#7a7a7a" stroke-width="1.2"/></svg>
<svg class="abs" style="left:52px;top:537px;" width="10" height="9" viewBox="0 0 10 9" fill="none"><path d="M0.5 8 L4 4 L6.5 6 L10 2" stroke="#7a7a7a" stroke-width="1.2"/></svg>
<svg class="abs" style="left:52px;top:579px;" width="10" height="12" viewBox="0 0 10 12" fill="none"><path d="M0.5 1.5h1.2M0.5 6h1.2M0.5 10.5h1.2M4 1.5h6M4 6h6M4 10.5h6" stroke="#7a7a7a" stroke-width="1.2"/></svg>
<svg class="abs" style="left:28px;top:627px;" width="15" height="13" viewBox="0 0 15 13" fill="none"><path d="M0.8 11.5 V1 H5.5 L7 2.8 H12.5 V5 M0.8 11.5 L3 5 H14.2 L12 11.5 Z" stroke="#8a8a8a" stroke-width="1.2"/></svg>
<div class="t" style="left:52.00px;top:626px;font-size:14px;line-height:14px;color:#8c8c8c;">R</div>
<svg class="abs" style="left:28px;top:670px;" width="14" height="14" viewBox="0 0 14 14" fill="none"><g stroke="#7e1c0c" stroke-width="1.2"><rect x="0.6" y="0.6" width="5" height="5"/><rect x="0.6" y="8.4" width="5" height="5"/><rect x="8.4" y="8.4" width="5" height="5"/><path d="M11 0.5 L13.5 3 L11 5.5 L8.5 3 Z"/></g></svg>
<div class="t" style="left:52.00px;top:670px;font-size:14px;line-height:14px;color:#821e0e;">H</div>
<svg class="abs" style="left:52px;top:717px;" width="10" height="14" viewBox="0 0 10 14" fill="none"><g stroke="#7a7a7a" stroke-width="1.1"><rect x="0.6" y="3" width="3" height="8"/><path d="M2.1 0 V3 M2.1 11 V14 M7.5 0 V14 M6 6 H9 V9 H6 Z"/></g></svg>
<svg class="abs" style="left:52px;top:763px;" width="10" height="13" viewBox="0 0 10 13" fill="none"><g stroke="#7a2012" stroke-width="1.2"><rect x="0.6" y="0.6" width="4.5" height="5"/><rect x="0.6" y="7.4" width="4.5" height="5"/><path d="M5 3 H10 M5 10 H10"/></g></svg>
<div class="abs" style="left:266px;top:39px;width:1069px;height:1px;background:#1c1c1c"></div>
<svg class="abs" style="left:275px;top:13px;" width="14" height="14" viewBox="0 0 14 14" fill="none"><path d="M1 2 H13.3 M5 5.3 H13.3 M5 8.6 H13.3 M1 11.9 H13.3" stroke="#8a8a8a" stroke-width="1.3"/><path d="M1 6.95 L4 4.9 V9 Z" fill="#8a8a8a"/></svg>
<div class="abs" style="left:310px;top:0px;width:187px;height:40px;background:#0f0f0f;border:1px solid #1a1a1a;border-bottom:none;border-radius:8px 8px 0 0"></div>
<svg class="abs" style="left:327px;top:13px;" width="15" height="14" viewBox="0 0 15 14" fill="none"><g fill="#8a8a8a"><circle cx="1.6" cy="2.5" r="1"/><circle cx="1.6" cy="7.5" r="1"/><circle cx="1.6" cy="11.5" r="1"/></g><path d="M4 2.5 H14 M4 7.5 H14 M4 11.5 H14" stroke="#8a8a8a" stroke-width="1.1"/></svg>
<div class="t" style="left:352.80px;top:13px;font-size:14px;line-height:14px;color:#8e8e8e;transform:scaleX(0.9655);transform-origin:0 0;">Lista de Proyectos</div>
<svg class="abs" style="left:473px;top:15px;" width="10" height="10" viewBox="0 0 10 10" fill="none"><path d="M0.5 0.5 L9.5 9.5 M9.5 0.5 L0.5 9.5" stroke="#6a6a6a" stroke-width="1.2"/></svg>
<div class="abs" style="left:500px;top:0px;width:163px;height:40px;background:#0b0b0b;border:1px solid #1a1a1a;border-bottom:none;border-radius:8px 8px 0 0"></div>
<svg class="abs" style="left:516px;top:13px;" width="14" height="14" viewBox="0 0 14 14" fill="none"><circle cx="7" cy="7" r="6.3" stroke="#85200f" stroke-width="1.2"/><path d="M5.3 4.2 L9.8 7 L5.3 9.8 Z" stroke="#85200f" stroke-width="1.2"/></svg>
<div class="t" style="left:543.70px;top:13px;font-size:14px;line-height:14px;color:#8a1e0e;transform:scaleX(0.9637);transform-origin:0 0;">Preview Video</div>
<svg class="abs" style="left:639px;top:15px;" width="10" height="10" viewBox="0 0 10 10" fill="none"><path d="M0.5 0.5 L9.5 9.5 M9.5 0.5 L0.5 9.5" stroke="#6a6a6a" stroke-width="1.2"/></svg>
<svg class="abs" style="left:1280px;top:13px;" width="14" height="14" viewBox="0 0 14 14" fill="none"><g stroke="#85200f" stroke-width="1.2"><circle cx="7" cy="7" r="2.8"/><path d="M7 0.5V2.5M7 11.5V13.5M0.5 7H2.5M11.5 7H13.5M2.4 2.4L3.8 3.8M10.2 10.2L11.6 11.6M2.4 11.6L3.8 10.2M10.2 3.8L11.6 2.4"/></g></svg>
<svg class="abs" style="left:1312px;top:13px;" width="14" height="14" viewBox="0 0 14 14" fill="none"><g stroke="#85200f" stroke-width="1.3"><circle cx="7" cy="4.5" r="3.6"/><path d="M1 13.8 C1 9.5 13 9.5 13 13.8"/></g></svg>
<div class="t" style="left:266.70px;top:64px;font-size:19px;line-height:19px;color:#8a8a8a;font-weight:bold;-webkit-text-stroke-width:0;transform:scaleX(0.9946);transform-origin:0 0;">Preview Video</div>
<svg class="abs" style="left:399px;top:66px;" width="14" height="14" viewBox="0 0 14 14" fill="none"><circle cx="7" cy="7" r="6.3" stroke="#8a8a8a" stroke-width="1.2"/><path d="M5.2 5.4 C5.2 3.2 8.8 3.2 8.8 5.4 C8.8 6.8 7 6.9 7 8.4" stroke="#8a8a8a" stroke-width="1.2"/><circle cx="7" cy="10.4" r="0.7" fill="#8a8a8a"/></svg>
<div class="abs" style="left:1232px;top:56px;width:103px;height:32px;background:#7a1204;border-radius:6px"></div>
<svg class="abs" style="left:1249px;top:65px;" width="14" height="14" viewBox="0 0 14 14" fill="none"><g stroke="#b8a8a4" stroke-width="1.1"><circle cx="10.5" cy="2.3" r="1.4"/><circle cx="2.6" cy="7" r="1.4"/><circle cx="10.5" cy="11.7" r="1.4"/><path d="M3.9 6.2 L9.2 3.1 M3.9 7.8 L9.2 10.9"/></g></svg>
<div class="t" style="left:1270.00px;top:65px;font-size:14px;line-height:14px;color:#b8aeae;transform:scaleX(0.9687);transform-origin:0 0;">Publicar</div>
<div class="abs" style="left:266px;top:96px;width:304px;height:30px;border:1px solid #1c1c1c;border-radius:8px"></div>
<div class="abs" style="left:582px;top:96px;width:307px;height:30px;border:1px solid #1c1c1c;border-radius:8px"></div>
<div class="abs" style="left:900px;top:96px;width:435px;height:710px;border:1px solid #1c1c1c;border-radius:8px"></div>
<div class="abs" style="left:1200px;top:142px;width:122px;height:1px;background:#1c1c1c"></div>
<div class="abs" style="left:1200px;top:189px;width:122px;height:32px;border:1px solid #1c1c1c;border-radius:6px"></div>
<div class="t" style="left:1296.00px;top:198px;font-size:14px;line-height:14px;color:#555555;transform:scaleX(0.8348);transform-origin:0 0;">51</div>
<div class="abs" style="left:912px;top:275px;width:410px;height:510px;border:1px solid #1c1c1c;border-radius:8px"></div>
<div class="t" style="left:1290.00px;top:372px;font-size:14px;line-height:14px;color:#8a8a8a;transform:scaleX(0.9848);transform-origin:0 0;">del</div>
<div class="t" style="left:1290.00px;top:565px;font-size:14px;line-height:14px;color:#8a8a8a;transform:scaleX(0.9848);transform-origin:0 0;">del</div>
<div class="t" style="left:1290.00px;top:697px;font-size:14px;line-height:14px;color:#8a8a8a;">os</div>
<div class="t" style="left:1297.00px;top:788px;font-size:14px;line-height:14px;color:#4a4a4a;">707</div>
<div class="abs" style="left:266px;top:700px;width:304px;height:101px;border:1px solid #1c1c1c;border-radius:8px"></div>
<div class="abs" style="left:417px;top:760px;width:1px;height:28px;background:#1c1c1c"></div>
<div class="abs" style="left:290px;top:772px;width:12px;height:6px;background:#6a1a0c"></div>
<div class="abs" style="left:312px;top:772px;width:82px;height:6px;background:#6a1a0c"></div>
<div class="abs" style="left:458px;top:772px;width:12px;height:5px;border:1px solid #555;border-top:none"></div>
<div class="abs" style="left:482px;top:772px;width:42px;height:5px;background:#444"></div>
<div class="abs" style="left:61px;top:100px;width:1229px;height:676px;background:#1f1f1f;border-radius:8px"></div>
<div class="t" style="left:85.40px;top:125px;font-size:16px;line-height:16px;color:#e6e6e6;font-weight:bold;-webkit-text-stroke-width:0;transform:scaleX(0.9154);transform-origin:0 0;">Publicar en redes sociales</div>
<svg class="abs" style="left:1255px;top:121px;" width="14" height="14" viewBox="0 0 14 14" fill="none"><path d="M0.5 0.5 L13.5 13.5 M13.5 0.5 L0.5 13.5" stroke="#a6a6a6" stroke-width="1.3"/></svg>
<div class="abs" style="left:85px;top:191px;width:1181px;height:1px;background:#303030"></div>
<div class="abs" style="left:609px;top:152px;width:134px;height:40px;background:#141414;border:1px solid #303030;border-bottom:none;border-radius:8px 8px 0 0"></div>
<svg class="abs" style="left:626px;top:166px;" width="13" height="13" viewBox="0 0 13 13" fill="none"><g stroke="#dc1e04" stroke-width="1.2"><rect x="0.6" y="0.6" width="11" height="11"/><path d="M10 3.2 Q9.6 3 9.2 3 Q7.4 3 7.4 5 V11.6 M5 6.6 H9.8"/></g></svg>
<div class="t" style="left:651.60px;top:165px;font-size:14px;line-height:14px;color:#dc1e04;transform:scaleX(0.9498);transform-origin:0 0;">Facebook</div>
<svg class="abs" style="left:719px;top:167px;" width="10" height="10" viewBox="0 0 10 10" fill="none"><path d="M0.5 0.5 L9.5 9.5 M9.5 0.5 L0.5 9.5" stroke="#a0a0a0" stroke-width="1.2"/></svg>
<div class="abs" style="left:85px;top:208px;width:785px;height:504px;background:#141414;border:1px solid #303030;border-radius:8px"></div>
<div class="abs" style="left:86px;top:246px;width:783px;height:1px;background:#303030"></div>
<div class="t" style="left:97.70px;top:221px;font-size:14px;line-height:14px;color:#e0e0e0;font-weight:bold;-webkit-text-stroke-width:0;transform:scaleX(0.9460);transform-origin:0 0;">Datos de publicación</div>
<div class="t" style="left:367.70px;top:221px;font-size:14px;line-height:14px;color:#d9d9d9;transform:scaleX(0.9355);transform-origin:0 0;">Fecha Publicación :</div>
<div class="abs" style="left:490px;top:212px;width:207px;height:32px;border:1px solid #404040;border-radius:6px"></div>
<div class="t" style="left:502.70px;top:221px;font-size:14px;line-height:14px;color:#5c5c5c;transform:scaleX(0.9596);transform-origin:0 0;">Seleccionar fecha</div>
<svg class="abs" style="left:672px;top:221px;" width="12" height="14" viewBox="0 0 12 14" fill="none"><g stroke="#6a6a6a" stroke-width="1.1"><rect x="0.55" y="2.6" width="10.9" height="10.5"/><path d="M0.6 5.6 H11.4 M3.6 0.6 V3.6 M8.5 0.6 V3.6"/></g></svg>
<div class="t" style="left:710.00px;top:221px;font-size:14px;line-height:14px;color:#d9d9d9;transform:scaleX(0.9531);transform-origin:0 0;">Publicar Ahora :</div>
<div class="abs" style="left:813px;top:217px;width:44px;height:22px;background:#535353;border-radius:11px"></div>
<div class="abs" style="left:815px;top:219px;width:18px;height:18px;background:#ffffff;border-radius:50%;box-shadow:0 0 1px 1px rgba(0,0,0,0.35)"></div>
<div class="t" style="left:98.00px;top:262px;font-size:14px;line-height:14px;color:#d9d9d9;transform:scaleX(0.9346);transform-origin:0 0;">Resumen</div>
<div class="abs" style="left:98px;top:288px;width:759px;height:97px;border:1px solid #404040;border-radius:6px"></div>
<div class="t" style="left:109.70px;top:297px;font-size:14px;line-height:14px;color:#dedede;transform:scaleX(0.9734);transform-origin:0 0;">Te mantenemos siempre al día con las últimas noticias de todo el país. Sigue nuestras redes sociales para estar</div>
<div class="t" style="left:109.70px;top:319px;font-size:14px;line-height:14px;color:#dedede;transform:scaleX(1.0083);transform-origin:0 0;">informado #Tunoticia</div>
<svg class="abs" style="left:847px;top:375px;" width="8" height="8" viewBox="0 0 8 8" fill="none"><path d="M1 7.5 L7.5 1 M4 7.5 L7.5 4" stroke="#9a9a9a" stroke-width="1"/></svg>
<div class="t" style="left:783.30px;top:388px;font-size:14px;line-height:14px;color:#8c8c8c;transform:scaleX(0.9762);transform-origin:0 0;">134 / 16192</div>
<svg class="abs" style="left:663px;top:420px;" width="12" height="12" viewBox="0 0 12 12" fill="none"><path d="M0.6 0.6 L11.4 11.4 M11.4 0.6 L0.6 11.4" stroke="#dc1e04" stroke-width="1.7"/></svg>
<div class="t" style="left:684.30px;top:419px;font-size:14px;line-height:14px;color:#dc1e04;transform:scaleX(0.9388);transform-origin:0 0;">Cancelar</div>
<svg class="abs" style="left:770px;top:420px;" width="13" height="13" viewBox="0 0 13 13" fill="none"><g stroke="#dc1e04" stroke-width="1.2" stroke-linejoin="round"><path d="M1.8 0.6 H9.6 L12.2 3.2 V11 Q12.2 12.2 11 12.2 H1.8 Q0.6 12.2 0.6 11 V1.8 Q0.6 0.6 1.8 0.6 Z M3.6 0.8 V3.2 H8.6 V0.8"/><rect x="4.6" y="5.8" width="3.2" height="3.2"/></g></svg>
<div class="t" style="left:791.40px;top:419px;font-size:14px;line-height:14px;color:#dc1e04;transform:scaleX(0.9501);transform-origin:0 0;">Guardar</div>
<div class="t" style="left:98.40px;top:470px;font-size:14px;line-height:14px;color:#d9d9d9;transform:scaleX(0.9863);transform-origin:0 0;">Tipo de Publicación</div>
<div class="t" style="left:321.60px;top:470px;font-size:14px;line-height:14px;color:#d9d9d9;transform:scaleX(1.0089);transform-origin:0 0;">Contenido</div>
<div class="abs" style="left:98px;top:496px;width:215px;height:32px;border:1px solid #404040;border-radius:6px"></div>
<div class="abs" style="left:321px;top:496px;width:216px;height:32px;border:1px solid #404040;border-radius:6px"></div>
<div class="t" style="left:110.00px;top:505px;font-size:14px;line-height:14px;color:#dedede;">Post</div>
<div class="t" style="left:333.60px;top:505px;font-size:14px;line-height:14px;color:#dedede;">Video</div>
<svg class="abs" style="left:291px;top:507px;" width="10" height="7" viewBox="0 0 10 7" fill="none"><path d="M0.5 0.8 L5 5.8 L9.5 0.8" stroke="#8a8a8a" stroke-width="1.1"/></svg>
<svg class="abs" style="left:515px;top:507px;" width="10" height="7" viewBox="0 0 10 7" fill="none"><path d="M0.5 0.8 L5 5.8 L9.5 0.8" stroke="#8a8a8a" stroke-width="1.1"/></svg>
<div class="abs" style="left:98px;top:582px;width:215px;height:32px;border:1px solid #404040;border-radius:6px"></div>
<div class="abs" style="left:321px;top:582px;width:216px;height:32px;border:1px solid #404040;border-radius:6px"></div>
<div class="t" style="left:110.00px;top:591px;font-size:14px;line-height:14px;color:#dedede;">Original</div>
<div class="t" style="left:333.60px;top:591px;font-size:14px;line-height:14px;color:#dedede;">1080p</div>
<svg class="abs" style="left:291px;top:593px;" width="10" height="7" viewBox="0 0 10 7" fill="none"><path d="M0.5 0.8 L5 5.8 L9.5 0.8" stroke="#8a8a8a" stroke-width="1.1"/></svg>
<svg class="abs" style="left:515px;top:593px;" width="10" height="7" viewBox="0 0 10 7" fill="none"><path d="M0.5 0.8 L5 5.8 L9.5 0.8" stroke="#8a8a8a" stroke-width="1.1"/></svg>
<div class="t" style="left:98.40px;top:556px;font-size:14px;line-height:14px;color:#d9d9d9;">Tipo de Video</div>
<div class="t" style="left:321.60px;top:556px;font-size:14px;line-height:14px;color:#d9d9d9;">Calidad</div>
<svg class="abs" style="left:545px;top:466px;filter:blur(0.35px)" width="312" height="174" viewBox="0 0 312 174"><use href="#collage"/></svg>
<div class="abs" style="left:549px;top:656px;width:303px;height:4px;background:#2a2a2a;border-radius:2px"></div>
<div class="abs" style="left:543px;top:651px;width:14px;height:14px;border:2px solid #7a1408;background:#242424;border-radius:50%"></div>
<div class="abs" style="left:878px;top:208px;width:388px;height:504px;background:#141414;border:1px solid #303030;border-radius:8px"></div>
<div class="abs" style="left:879px;top:246px;width:386px;height:1px;background:#303030"></div>
<div class="t" style="left:891.00px;top:221px;font-size:14px;line-height:14px;color:#e0e0e0;font-weight:bold;-webkit-text-stroke-width:0;transform:scaleX(0.9275);transform-origin:0 0;">Vista Previa</div>
<div class="abs" style="left:891px;top:258px;width:362px;height:394px;border:1px solid #303030;border-radius:8px;background:#141414"></div>
<div class="abs" style="left:904px;top:271px;width:40px;height:40px;background:#555555;border-radius:50%"></div>
<div class="t" style="left:948.10px;top:275px;font-size:14px;line-height:14px;color:#e0e0e0;font-weight:bold;-webkit-text-stroke-width:0;transform:scaleX(0.9662);transform-origin:0 0;">Última Noticia</div>
<div class="t" style="left:948.00px;top:297px;font-size:11px;line-height:11px;color:#8c8c8c;transform:scaleX(0.9568);transform-origin:0 0;">Hace un momento</div>
<div class="abs" style="left:1219px;top:286px;width:2px;height:2px;background:#cfcfcf;border-radius:1px"></div>
<div class="abs" style="left:1223px;top:286px;width:2px;height:2px;background:#cfcfcf;border-radius:1px"></div>
<div class="abs" style="left:1227px;top:286px;width:2px;height:2px;background:#cfcfcf;border-radius:1px"></div>
<div class="t" style="left:903.80px;top:319px;font-size:14px;line-height:14px;color:#dedede;transform:scaleX(0.9272);transform-origin:0 0;">Te mantenemos siempre al día con las últimas noticias del</div>
<div class="t" style="left:903.80px;top:341px;font-size:14px;line-height:14px;color:#dedede;transform:scaleX(0.9117);transform-origin:0 0;">todo el país. Sigue nuestras redes sociales para estar</div>
<div class="t" style="left:903.80px;top:363px;font-size:14px;line-height:14px;color:#dedede;transform:scaleX(0.9430);transform-origin:0 0;">informado #Tunoticia</div>
<svg class="abs" style="left:891px;top:407px;filter:blur(0.35px)" width="362" height="202" viewBox="0 0 312 174" preserveAspectRatio="none"><use href="#collage"/></svg>
<svg class="abs" style="left:936px;top:623px;" width="14" height="16" viewBox="0 0 14 16" fill="none"><g stroke="#d0d0d0" stroke-width="1.15" stroke-linejoin="round"><rect x="1.2" y="8.3" width="2.9" height="6.3"/><path d="M4.1 14.6 H11.3 Q12.3 14.6 12.5 13.6 L12.9 6.6 Q12.9 5.4 11.8 5.4 H8.1 V3.1 Q8.1 1.6 6.6 1.6 Q5.5 1.7 5.3 3 L4.6 6.6 Q4.2 8 4.1 8.3"/></g></svg>
<div class="t" style="left:957.70px;top:624px;font-size:14px;line-height:14px;color:#d0d0d0;transform:scaleX(0.9889);transform-origin:0 0;">82</div>
<svg class="abs" style="left:1029px;top:623px;" width="16" height="16" viewBox="0 0 16 16" fill="none"><g stroke="#d0d0d0" stroke-width="1.15" stroke-linejoin="round"><path d="M2.4 12.8 L2.9 10.4 A5.3 5.3 0 1 1 4.9 12.3 Z"/><path d="M9.6 2.6 A5.3 5.3 0 0 1 14.2 10.6 L14.8 14 L11.4 13.3 Q9 14.3 6.2 13.4"/></g><g fill="#d0d0d0"><circle cx="4.8" cy="7.3" r="0.6"/><circle cx="6.9" cy="7.3" r="0.6"/><circle cx="9" cy="7.3" r="0.6"/></g></svg>
<div class="t" style="left:1052.40px;top:624px;font-size:14px;line-height:14px;color:#d0d0d0;transform:scaleX(0.9907);transform-origin:0 0;">Comentar</div>
<svg class="abs" style="left:1148px;top:625px;" width="13" height="13" viewBox="0 0 14 14" fill="none"><g stroke="#c8c8c8" stroke-width="1.2"><circle cx="11" cy="2.7" r="2"/><circle cx="3" cy="7" r="2"/><circle cx="11" cy="11.3" r="2"/><path d="M4.8 6 L9.2 3.7 M4.8 8 L9.2 10.3"/></g></svg>
<div class="t" style="left:1169.40px;top:624px;font-size:14px;line-height:14px;color:#d0d0d0;transform:scaleX(1.0137);transform-origin:0 0;">Compartir</div>
<div class="abs" style="left:1092px;top:724px;width:85px;height:32px;border:1px solid #404040;border-radius:6px;background:#141414"></div>
<div class="t" style="left:1108.00px;top:733px;font-size:14px;line-height:14px;color:#e0e0e0;transform:scaleX(0.9406);transform-origin:0 0;">Cancelar</div>
<div class="abs" style="left:1185px;top:724px;width:81px;height:32px;background:#da1c02;border-radius:6px"></div>
<div class="t" style="left:1201.50px;top:733px;font-size:14px;line-height:14px;color:#ffffff;transform:scaleX(0.9687);transform-origin:0 0;-webkit-text-stroke:0.25px #ffffff;">Publicar</div>
<div class="abs" style="left:0px;top:800px;width:1351px;height:1px;background:#e8e8e8"></div>
</body></html>
